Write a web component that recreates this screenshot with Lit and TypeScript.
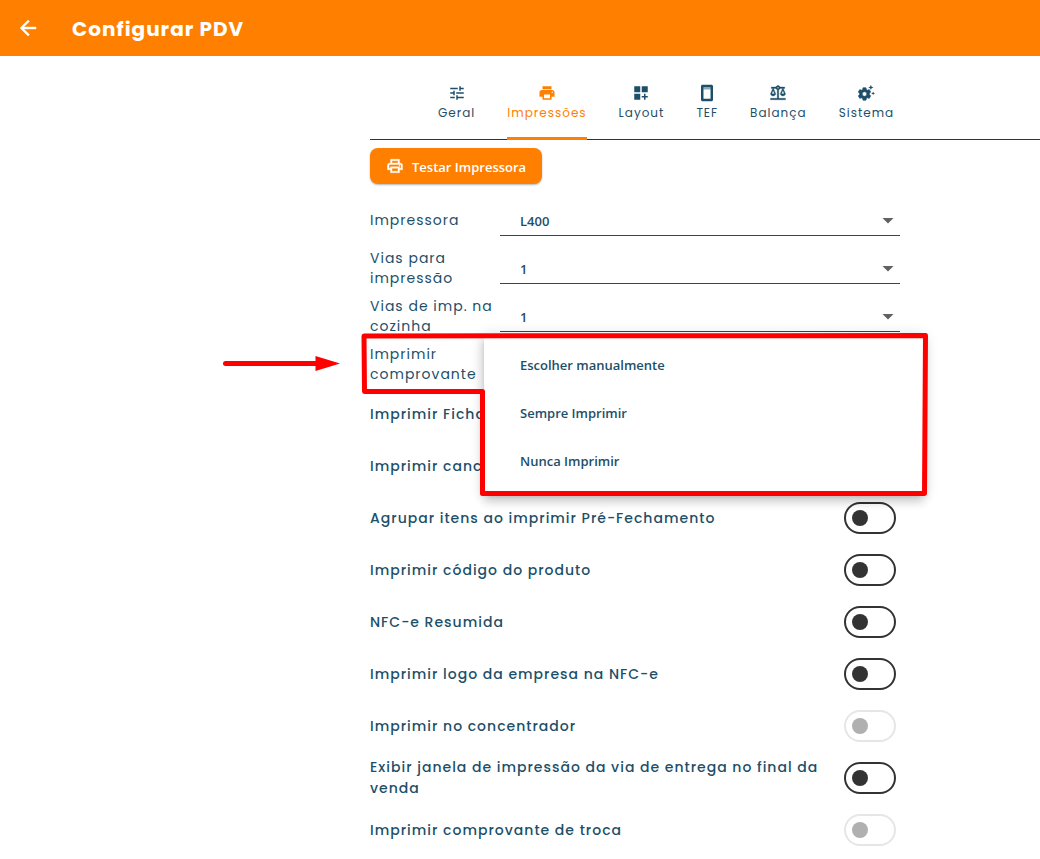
import { LitElement, html, css, svg, nothing } from "lit";
import { customElement, state } from "lit/decorators.js";

interface Tab { id: string; label: string; icon: unknown; }
interface Field { id: string; label: string; value: string; }
interface Toggle { id: string; label: string; disabled?: boolean; }

const printSolid = svg`<path d="M19 8H5c-1.66 0-3 1.34-3 3v6h4v4h12v-4h4v-6c0-1.66-1.34-3-3-3zm-3 11H8v-5h8v5zm3-7c-.55 0-1-.45-1-1s.45-1 1-1 1 .45 1 1-.45 1-1 1zm-1-9H6v4h12V3z"/>`;
const printOutline = svg`<path d="M19 8h-1V3H6v5H5c-1.66 0-3 1.34-3 3v6h4v4h12v-4h4v-6c0-1.66-1.34-3-3-3zM8 5h8v3H8V5zm8 12v2H8v-4h8v2zm2-2v-2H6v2H4v-4c0-.55.45-1 1-1h14c.55 0 1 .45 1 1v4h-2z" stroke="currentColor" stroke-width=".5"/><circle cx="18" cy="11.5" r="1"/>`;

const TABS: Tab[] = [
  { id: "geral", label: "Geral", icon: svg`<path d="M3 17v2h6v-2H3zM3 5v2h10V5H3zm10 16v-2h8v-2h-8v-2h-2v6h2zM7 9v2H3v2h4v2h2V9H7zm14 4v-2H11v2h10zm-6-4h2V7h4V5h-4V3h-2v6z"/>` },
  { id: "impressoes", label: "Impressões", icon: printSolid },
  { id: "layout", label: "Layout", icon: svg`<path d="M3 3h8v8H3zM13 3h8v8h-8zM3 13h8v8H3zM18 13h-2v3h-3v2h3v3h2v-3h3v-2h-3z"/>` },
  { id: "tef", label: "TEF", icon: svg`<path d="M18 1H6c-1.100 0-2 .9-2 2v18c0 1.100.9 2 2 2h12c1.100 0 2-.9 2-2V3c0-1.100-.9-2-2-2zm-1.300 18.700H7.300V4.600h9.400v15.100z"/><path d="M7 6h10v1H7z"/>` },
  { id: "balanca", label: "Balança", icon: svg`<path d="M13 7.830c.850-.300 1.530-.980 1.830-1.830H18l-3 7c0 1.660 1.570 3 3.500 3s3.500-1.340 3.500-3l-3-7h2V4h-6.170c-.410-1.170-1.520-2-2.830-2s-2.420.830-2.830 2H3v2h2l-3 7c0 1.660 1.570 3 3.500 3S9 14.660 9 13L6 6h3.170c.300.850.980 1.530 1.830 1.830V19H2v2h20v-2h-9V7.830zM20.370 13h-3.740l1.870-4.360L20.370 13zm-13 0H3.630L5.500 8.640 7.370 13zM12 6c-.55 0-1-.45-1-1s.45-1 1-1 1 .45 1 1-.45 1-1 1z" stroke="currentColor" stroke-width=".4"/>` },
  { id: "sistema", label: "Sistema", icon: svg`<path fill-rule="evenodd" stroke="currentColor" stroke-width=".8" stroke-linejoin="round" d="M8 5h4l.5 2.300 1.600.900 2.200-.800 2 3.400-1.700 1.600v1.800l1.700 1.600-2 3.400-2.200-.800-1.600.900L12 21.600H8l-.5-2.300-1.600-.900-2.200.800-2-3.400 1.700-1.600v-1.800l-1.700-1.600 2-3.400 2.200.800 1.600-.900zM10 10.200a3.100 3.100 0 1 0 0 6.200 3.100 3.100 0 0 0 0-6.200z"/><path d="M18.500 1l1 2.500L22 4.500l-2.500 1-1 2.500-1-2.500-2.500-1 2.500-1zM21.500 10l.7 1.800 1.800.7-1.800.7-.7 1.800-.7-1.800-1.800-.7 1.800-.7z"/>` },
];

const FIELDS: Field[] = [
  { id: "impressora", label: "Impressora", value: "L400" },
  { id: "vias", label: "Vias para impressão", value: "1" },
  { id: "vias-cozinha", label: "Vias de imp. na cozinha", value: "1" },
];

const CHOICES = ["Escolher manualmente", "Sempre Imprimir", "Nunca Imprimir"];

const TOGGLES: Toggle[] = [
  { id: "ficha", label: "Imprimir Ficha" },
  { id: "canc", label: "Imprimir canc." },
  { id: "agrupar", label: "Agrupar itens ao imprimir Pré-Fechamento" },
  { id: "codigo", label: "Imprimir código do produto" },
  { id: "resumida", label: "NFC-e Resumida" },
  { id: "logo", label: "Imprimir logo da empresa na NFC-e" },
  { id: "concentrador", label: "Imprimir no concentrador", disabled: true },
  { id: "entrega", label: "Exibir janela de impressão da via de entrega no final da venda" },
  { id: "troca", label: "Imprimir comprovante de troca", disabled: true },
];

@customElement("app-root")
export class AppRoot extends LitElement {
  static styles = css`
    :host {
      --orange: #ff8000;
      --ink: #1d4f69;
      --dark: #333333;
      --display: Poppins, Inter, sans-serif;
      --text: "Segoe UI", "Open Sans", "Noto Sans", sans-serif;
      display: block;
      min-height: 100vh;
      background: #ffffff;
      color: var(--ink);
      font-family: var(--display);
      overflow: hidden;
    }
    * { box-sizing: border-box; }
    button, select, input { margin: 0; font: inherit; color: inherit; }
    button { border: 0; padding: 0; background: none; cursor: pointer; }
    svg { display: block; fill: currentColor; }

    .bar {
      display: flex;
      align-items: center;
      gap: 32px;
      height: 56px;
      padding: 0 16px;
      background: var(--orange);
      color: #ffffff;
    }
    .title { margin: 0; padding-top: 2px; font-size: 20px; line-height: 32px; font-weight: 700; letter-spacing: 1px; }

    .page { padding: 20px 0 0 370px; }
    .tabs {
      display: flex;
      height: 64px;
      padding-left: 52px;
      border-bottom: 1px solid var(--dark);
    }
    .tab {
      display: flex;
      flex-direction: column;
      align-items: center;
      height: 64px;
      margin: 0 16px;
      padding-top: 8px;
      border-bottom: 3px solid transparent;
      font-size: 12px;
      line-height: 22px;
      font-weight: 400;
      letter-spacing: 1px;
      white-space: nowrap;
    }
    .tab.on { color: var(--orange); border-bottom-color: var(--orange); border-radius: 3px 3px 0 0; }

    .form { max-width: 530px; padding-top: 8px; }
    .test {
      display: flex;
      align-items: center;
      gap: 8px;
      height: 36px;
      margin-bottom: 12px;
      padding: 0 16px;
      border-radius: 8px;
      background: var(--orange);
      color: #ffffff;
      font-family: var(--text);
      font-size: 13px;
      font-weight: 600;
      box-shadow: 0 1px 2px rgba(0, 0, 0, 0.3);
    }
    .test span { padding-top: 2px; }

    .field {
      position: relative;
      display: grid;
      grid-template-columns: 130px minmax(0, 1fr);
      align-items: center;
      height: 48px;
      font-size: 14px;
      line-height: 20px;
      letter-spacing: 1px;
    }
    .pick { display: grid; align-items: center; }
    .pick > * { grid-area: 1 / 1; }
    .pick select {
      width: 100%;
      height: 32px;
      padding: 2px 20px 0;
      border: 0;
      border-bottom: 1px solid var(--ink);
      border-radius: 0;
      background: transparent;
      appearance: none;
      font-family: var(--text);
      font-size: 13px;
      font-weight: 600;
    }
    .caret { justify-self: end; margin: 1px 6px 0 0; color: #616161; pointer-events: none; }

    .menu {
      position: absolute;
      z-index: 1;
      top: -7px;
      left: 114px;
      right: -24px;
      margin: 0;
      padding: 8px 0;
      background: #ffffff;
      border-radius: 4px;
      box-shadow: 0 5px 5px -3px rgba(0, 0, 0, 0.2), 0 8px 10px 1px rgba(0, 0, 0, 0.14), 0 3px 14px 2px rgba(0, 0, 0, 0.12);
      list-style: none;
      font-family: var(--text);
      font-size: 13px;
      font-weight: 600;
      letter-spacing: normal;
    }
    .option { padding: 14px 36px; line-height: 20px; cursor: pointer; }
    .marks {
      position: absolute;
      z-index: 2;
      top: -10px;
      left: -150px;
      overflow: visible;
      pointer-events: none;
    }

    .toggle {
      display: flex;
      align-items: center;
      justify-content: space-between;
      gap: 16px;
      min-height: 52px;
      padding-right: 4px;
      font-size: 14px;
      line-height: 21px;
      font-weight: 500;
      letter-spacing: 1px;
    }
    .switch {
      flex: none;
      display: flex;
      align-items: center;
      width: 52px;
      height: 32px;
      padding: 0 6px;
      border: 2px solid var(--dark);
      border-radius: 16px;
      background: #ffffff;
      appearance: none;
    }
    .switch::before { content: ""; width: 16px; height: 16px; border-radius: 50%; background: var(--dark); }
    .switch:checked { justify-content: flex-end; }
    .switch:disabled { border-color: #e6e6e6; }
    .switch:disabled::before { background: #b0b0b0; }
  `;

  @state() private tab = "impressoes";
  @state() private open = true;
  @state() private choice = CHOICES[0];

  private icon(shape: unknown, size: number) {
    return html`<svg width=${size} height=${size} viewBox="0 0 24 24" aria-hidden="true">${shape}</svg>`;
  }

  private caret() {
    return html`<svg class="caret" width="12" height="6" viewBox="0 0 12 6" aria-hidden="true"><path d="M.5 0h11L6 5.500z"/></svg>`;
  }

  private choose(value: string) {
    this.choice = value;
    this.open = false;
  }

  private menu() {
    if (!this.open) return nothing;
    return html`
      <ul class="menu" role="listbox" aria-label="Imprimir comprovante">
        ${CHOICES.map((c) => html`<li class="option" role="option" tabindex="0" aria-selected="false" @click=${() => this.choose(c)}>${c}</li>`)}
      </ul>
      <svg class="marks" width="710" height="170" viewBox="220 330 710 170" aria-hidden="true">
        <path d="M364 336L925.500 335.500L924.500 493.500H482.500V391.500H364.500Z" fill="none" stroke="#ff0000" stroke-width="5" stroke-linejoin="round"/>
        <path d="M225.500 363.500H318" stroke="#ff0000" stroke-width="5" stroke-linecap="round"/>
        <path d="M315.500 356L340 363.500L315.500 371Z" fill="#ff0000"/>
      </svg>`;
  }

  render() {
    return html`
      <header class="bar">
        <button aria-label="Voltar">${this.icon(svg`<path d="M20 11H7.830l5.590-5.590L12 4l-8 8 8 8 1.410-1.410L7.830 13H20v-2z" stroke="currentColor" stroke-width=".4"/>`, 24)}</button>
        <h1 class="title">Configurar PDV</h1>
      </header>
      <main class="page">
        <nav class="tabs" role="tablist">
          ${TABS.map((t) => html`
            <button class="tab ${t.id === this.tab ? "on" : ""}" role="tab" aria-selected=${t.id === this.tab} @click=${() => (this.tab = t.id)}>
              ${this.icon(t.icon, 18)}<span>${t.label}</span>
            </button>`)}
        </nav>
        <section class="form">
          <button class="test">${this.icon(printOutline, 18)}<span>Testar Impressora</span></button>
          ${FIELDS.map((f) => html`
            <div class="field">
              <label for=${f.id}>${f.label}</label>
              <div class="pick"><select id=${f.id}><option>${f.value}</option></select>${this.caret()}</div>
            </div>`)}
          <div class="field">
            <label for="comprovante">Imprimir comprovante</label>
            <div class="pick">
              <select id="comprovante" .value=${this.choice} @mousedown=${() => (this.open = true)}>
                ${CHOICES.map((c) => html`<option>${c}</option>`)}
              </select>${this.caret()}
            </div>
            ${this.menu()}
          </div>
          ${TOGGLES.map((t) => html`
            <div class="toggle">
              <label for=${t.id}>${t.label}</label>
              <input class="switch" id=${t.id} type="checkbox" role="switch" ?disabled=${!!t.disabled}>
            </div>`)}
        </section>
      </main>`;
  }
}
